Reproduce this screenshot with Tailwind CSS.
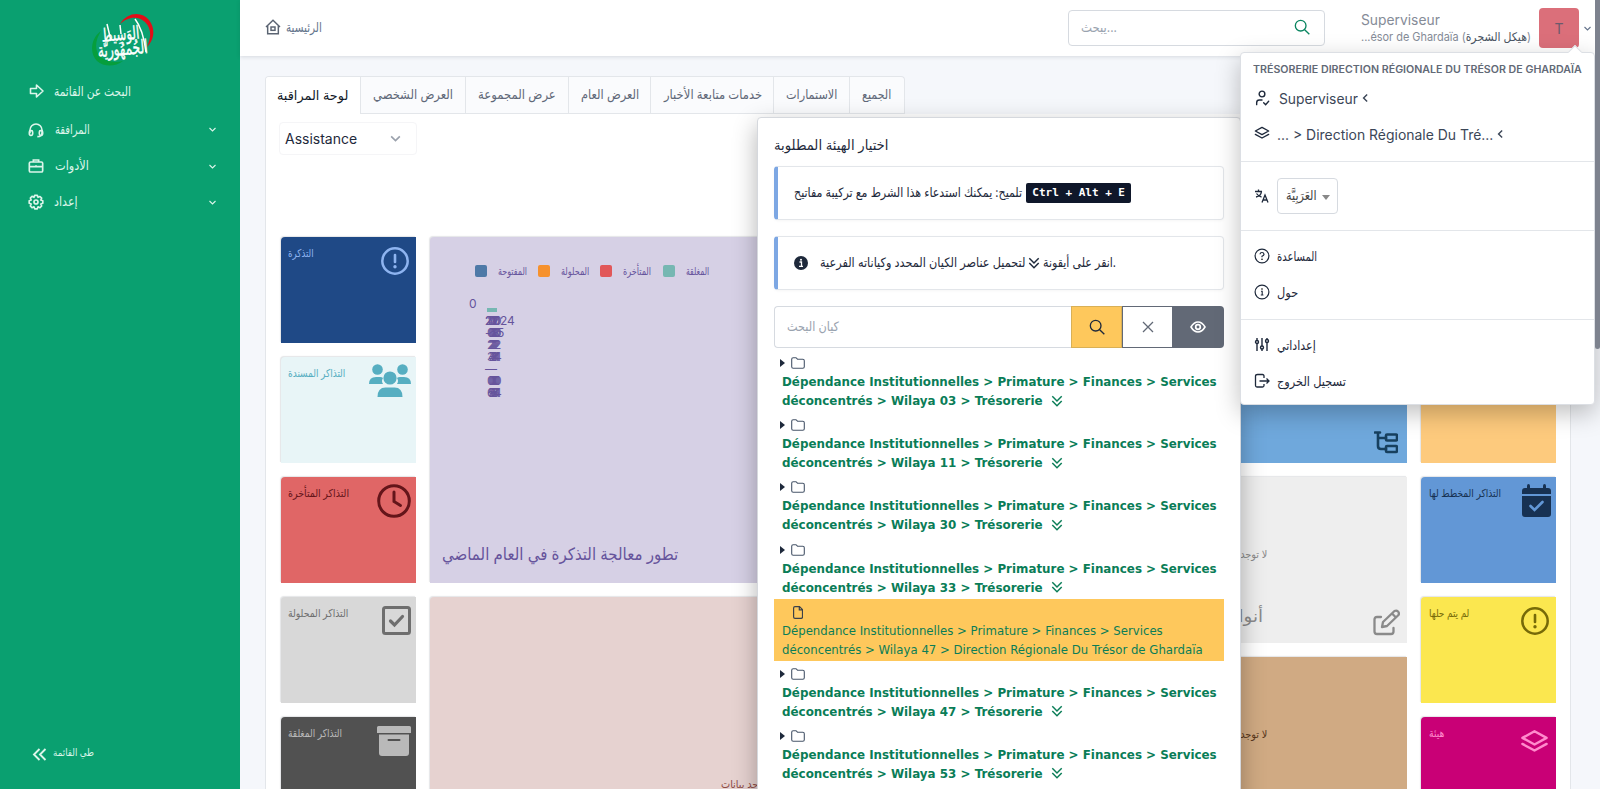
<!DOCTYPE html>
<html lang="ar">
<head>
<meta charset="utf-8">
<title>الرئيسية</title>
<script src="https://cdn.jsdelivr.net/npm/@tailwindcss/browser@4"></script>
</head>
<body class="relative h-[789px] w-[1600px] overflow-hidden bg-[#f5f7fb] font-['Inter','DejaVu_Sans',sans-serif] text-[14px] text-[#1e293b]">
<svg class="hidden">
  <defs>
    <symbol id="chev" viewBox="0 0 24 24"><path d="M4 8l8 8 8-8" fill="none" stroke="currentColor" stroke-width="3"/></symbol>
    <symbol id="left" viewBox="0 0 10 14"><path d="M8 2L3 7l5 5" fill="none" stroke="currentColor" stroke-width="2"/></symbol>
    <symbol id="dchev" viewBox="0 0 14 14"><path d="M1.500 1.500L7 7l5.500-5.500M1.500 7L7 12.500 12.500 7" fill="none" stroke="currentColor" stroke-width="1.700"/></symbol>
    <symbol id="search" viewBox="0 0 24 24"><g fill="none" stroke="currentColor" stroke-width="2"><circle cx="10" cy="10" r="8"/><path d="M16 16l7 7"/></g></symbol>
    <symbol id="folder" viewBox="0 0 14 12"><path d="M.7 2.200Q.7.700 2.200.700H5l1.500 1.500h5.300q1.500 0 1.500 1.500v6.100q0 1.500-1.500 1.500H2.200Q.7 11.300.7 9.800z" fill="none" stroke="#475569" stroke-width="1.100"/></symbol>
    <symbol id="layers" viewBox="0 0 24 24"><g fill="none" stroke="currentColor" stroke-width="2" stroke-linejoin="round" stroke-linecap="round"><path d="M12 3.500l10 5.500-10 5.500L2 9zM2 14l10 5.500L22 14"/></g></symbol>
    <symbol id="alert" viewBox="0 0 28 28"><circle cx="14" cy="14" r="12.700" fill="none" stroke="currentColor" stroke-width="2.500"/><path d="M14 8v7" stroke="currentColor" stroke-width="2.600" stroke-linecap="round"/><circle cx="14" cy="19.800" r="1.700" fill="currentColor"/></symbol>
  </defs>
</svg>

<div class="flex h-full">
  <!-- Sidebar -->
  <aside class="flex h-full w-[240px] shrink-0 flex-col bg-[#0aa070] text-[13px] text-[#dcf5ea]">
    <div class="flex h-[72px] shrink-0 justify-center pt-[12px] pl-[5px]">
      <svg width="66" height="56" viewBox="0 0 66 56">
        <path d="M30 12C37 0 52-1 59 8c7 9 5 20-2 27 4-9 5-18-2-25-7-7-18-5-25 2z" fill="#e30d18"/>
        <path d="M11 19C1 26-1 41 7 49c7 6 18 6 26 0C25 51 15 50 9 43 4 36 6 27 11 19z" fill="#069e3c"/>
        <g fill="#fff" stroke="#fff" stroke-width=".4" font-family="DejaVu Sans" transform="rotate(-5 33 30)">
          <text x="12" y="28" font-size="18" textLength="38" lengthAdjust="spacingAndGlyphs">الوَسِيط</text>
          <text x="7" y="43" font-size="19" textLength="50" lengthAdjust="spacingAndGlyphs">الجُمهُوريّة</text>
        </g>
        <path d="M45 7q8 10 11 33M17 12l4 17M30 13l1 9" stroke="#fff" stroke-width="1.500" fill="none"/>
      </svg>
    </div>
    <nav class="flex flex-col">
      <div class="flex h-[38px] items-center pt-px pl-[29px]">
        <svg width="16" height="16" viewBox="0 0 16 16" class="mr-[9px] -mt-px"><path d="M1.500 5.500h6V2l6.500 6-6.500 6v-3.500h-6z" fill="none" stroke="currentColor" stroke-width="1.600" stroke-linejoin="round"/></svg>
        <span data-w="77" class="pt-px">البحث عن القائمة</span>
      </div>
      <div class="flex h-[38px] items-center pr-[23px] pl-[28px] pt-px">
        <svg width="16" height="16" viewBox="0 0 24 24" class="mr-[11px]"><g fill="none" stroke="currentColor" stroke-width="2.400"><path d="M3 17v-5a9 9 0 0 1 18 0v4c0 4-2 6-7 6"/><rect x="2" y="13" width="5" height="7" rx="2"/><rect x="17" y="13" width="5" height="7" rx="2"/></g></svg>
        <span data-w="35">المرافقة</span>
        <svg width="9" height="9" class="ml-auto"><use href="#chev"/></svg>
      </div>
      <div class="flex h-[36px] items-center pr-[23px] pl-[28px]">
        <svg width="16" height="16" viewBox="0 0 24 24" class="mr-[11px]"><g fill="none" stroke="currentColor" stroke-width="2.500"><rect x="2" y="6" width="20" height="15" rx="2"/><path d="M8 6V3h8v3M2 13h20M12 11v3"/></g></svg>
        <span data-w="34">الأدوات</span>
        <svg width="9" height="9" class="ml-auto"><use href="#chev"/></svg>
      </div>
      <div class="flex h-[36px] items-center pr-[23px] pl-[28px]">
        <svg width="16" height="16" viewBox="0 0 24 24" class="mr-[10px]"><g fill="none" stroke="currentColor" stroke-width="2.500" stroke-linejoin="round"><path d="M10 2h4l1 3 3-1.200 2.500 2.500L19.200 9l3 1v4l-3 1 1.300 3-2.500 2.500L15 19.200l-1 3h-4l-1-3-3 1.300L3.500 18 4.800 15l-3-1v-4l3-1L3.500 6 6 3.500 9 5z"/><circle cx="12" cy="12" r="3"/></g></svg>
        <span data-w="24">إعداد</span>
        <svg width="9" height="9" class="ml-auto"><use href="#chev"/></svg>
      </div>
    </nav>
    <div class="mt-auto mb-[22px] flex h-[25px] items-center pl-[32px]">
      <svg width="15" height="13" viewBox="0 0 15 13" class="mr-[6px]"><path d="M7.500 1L2 6.500 7.500 12M13.500 1L8 6.500l5.500 5.500" fill="none" stroke="currentColor" stroke-width="1.900"/></svg>
      <span data-w="41" class="-mt-[4px] text-[10px]">طي القائمة</span>
    </div>
  </aside>

  <div class="flex min-w-0 flex-1 flex-col">
    <!-- Top bar -->
    <header class="flex h-[56px] shrink-0 items-center bg-white pl-[25px] shadow-[0_1px_4px_rgba(30,41,59,0.14)]">
      <svg width="16" height="16" viewBox="0 0 24 24" class="mr-[5px] -mt-[3px] text-[#5b6472]"><g fill="none" stroke="currentColor" stroke-width="2.200"><path d="M1.500 12L12 2l10.500 10M4 10v12h16V10"/><rect x="9" y="12" width="6" height="5"/></g></svg>
      <span data-w="36" class="text-[13px] text-[#64748b]">الرئيسية</span>
      <div class="ml-auto flex h-[36px] w-[257px] items-center rounded border border-[#d6dae0] pr-[14px] pl-[12px] text-[#9aa3af]">
        <span data-w="36" class="text-[13px]">يبحث...</span>
        <svg width="16" height="16" class="ml-auto -mt-[2px] text-[#0a8560]"><use href="#search"/></svg>
      </div>
      <div class="mr-[8px] ml-[36px] flex w-[170px] flex-col text-[#858b97]">
        <span data-w="79" class="h-[18px] self-start text-[14px] leading-[18px]">Superviseur</span>
        <span data-w="170" class="h-[16px] self-start text-[12px] leading-[16px]">...ésor de Ghardaïa (<b class="font-normal text-[#4b5563]">هيكل الشجرة</b>)</span>
      </div>
      <div class="flex h-[40px] w-[40px] items-center justify-center rounded bg-[#db6f7a] text-[14px] text-[#6b5a6c]">T</div>
      <svg width="9" height="9" class="mr-[8px] ml-[4px] text-[#64748b]"><use href="#chev"/></svg>
    </header>

    <!-- Tabs -->
    <main class="ml-[25px] mt-[20px] w-[1306px] text-[13px]">
      <div class="flex h-[38px] w-[640px] overflow-hidden rounded-t border border-b-0 border-[#e3e6ea] bg-[#fafbfd] text-[#5f6878]">
        <div class="flex w-[95px] items-center border-r border-[#e3e6ea] bg-white pl-[11px] text-[#111827]"><span data-w="71">لوحة المراقبة</span></div>
        <div class="flex w-[105px] items-center border-r border-b border-[#e3e6ea] pl-[12px]"><span data-w="80">العرض الشخصي</span></div>
        <div class="flex w-[103px] items-center border-r border-b border-[#e3e6ea] pl-[12px]"><span data-w="78">عرض المجموعة</span></div>
        <div class="flex w-[82px] items-center border-r border-b border-[#e3e6ea] pl-[12px]"><span data-w="58">العرض العام</span></div>
        <div class="flex w-[123px] items-center border-r border-b border-[#e3e6ea] pl-[13px]"><span data-w="98">خدمات متابعة الأخبار</span></div>
        <div class="flex w-[76px] items-center border-r border-b border-[#e3e6ea] pl-[12px]"><span data-w="51">الاستمارات</span></div>
        <div class="flex flex-1 items-center border-b border-[#e3e6ea] pl-[12px]"><span data-w="29">الجميع</span></div>
      </div>
      <div class="h-[680px] border border-t-0 border-[#e3e6ea] bg-white pt-[8px] pl-[13px]">
        <div class="flex h-[33px] w-[138px] items-center rounded-sm border border-[#f5f5f7] pr-[14px] pl-[5px]">
          <span data-w="72" class="text-[14px]">Assistance</span>
          <svg width="13" height="13" class="ml-auto text-[#9aa1ac]"><use href="#chev"/></svg>
        </div>

        <!-- Dashboard widgets -->
        <div class="mt-[82px] ml-[2px] grid grid-cols-[135px_621px_342px_135px] grid-rows-[repeat(12,46px)] gap-[14px] text-[11px] [&>div]:rounded-tl [&>div]:shadow-[-1px_-1px_1px_rgba(30,41,59,0.12)]">
          <div class="col-start-1 row-start-1 row-span-2 flex justify-between bg-[#1f4986] pt-[7px] pr-[5px] pl-[7px] text-[#8eb4f0]">
            <span data-w="26" class="h-[18px] leading-[18px]">التذكرة</span>
            <svg width="28" height="28" class="mt-[3px] mr-[2px]"><use href="#alert"/></svg>
          </div>
          <div class="col-start-1 row-start-3 row-span-2 flex justify-between bg-[#e8f5f7] pt-[7px] pr-[5px] pl-[7px] text-[#56aec1]">
            <span data-w="57" class="h-[18px] leading-[18px]">التذاكر المسندة</span>
            <svg width="42" height="34" viewBox="0 0 42 34"><g fill="currentColor"><circle cx="8.500" cy="5.500" r="5.300"/><circle cx="33.500" cy="5.500" r="5.300"/><circle cx="21" cy="14" r="6.600"/><path d="M0 20q0-7 7-7h4q2 0 3 1-2 3 0 6zM42 20q0-7-7-7h-4q-2 0-3 1 2 3 0 6zM8.500 33q0-9.500 8-9.500h9q8 0 8 9.500z"/></g></svg>
          </div>
          <div class="col-start-1 row-start-5 row-span-2 flex justify-between bg-[#e06666] pt-[7px] pr-[5px] pl-[7px] text-[#64151a]">
            <span data-w="61" class="h-[18px] leading-[18px]">التذاكر المتأخرة</span>
            <svg width="34" height="34" viewBox="0 0 34 34"><g fill="none" stroke="currentColor" stroke-width="3"><circle cx="17" cy="17" r="15.300"/><path d="M17 8v9.500l6.500 4" stroke-linecap="round"/></g></svg>
          </div>
          <div class="col-start-1 row-start-7 row-span-2 flex justify-between bg-[#d8d8d8] pt-[7px] pr-[5px] pl-[7px] text-[#6e6e6e]">
            <span data-w="60" class="h-[18px] leading-[18px]">التذاكر المحلولة</span>
            <svg width="29" height="29" viewBox="0 0 29 29" class="mt-[2px]"><g fill="none" stroke="currentColor" stroke-width="3"><rect x="1.500" y="1.500" width="26" height="26" rx="2"/><path d="M8.500 15l4 4 8-8.500" stroke-width="3.200" stroke-linecap="round"/></g></svg>
          </div>
          <div class="col-start-1 row-start-9 row-span-2 flex justify-between bg-[#515151] pt-[7px] pr-[5px] pl-[7px] text-[#b9b9b9]">
            <span data-w="54" class="h-[18px] leading-[18px]">التذاكر المغلقة</span>
            <svg width="34" height="30" viewBox="0 0 34 30" class="mt-[2px]"><path d="M1.500 0h31Q34 0 34 1.500V7H0V1.500Q0 0 1.500 0zM2 8.500h30V27q0 3-3 3H5q-3 0-3-3z" fill="currentColor"/><path d="M11.500 14h11" stroke="#515151" stroke-width="2" stroke-linecap="round"/></svg>
          </div>

          <div class="col-start-2 row-start-1 row-span-6 flex flex-col bg-[#d6d0e5] text-[#66549c]">
            <div class="mt-[28px] ml-[45px] flex h-[12px] items-center text-[11px]">
              <i class="mr-[11px] size-[12px] shrink-0 rounded-[2px] bg-[#4e79a7]"></i><span data-w="29">المفتوحة</span>
              <i class="mr-[11px] ml-[11px] size-[12px] shrink-0 rounded-[2px] bg-[#f6912d]"></i><span data-w="28">المحلولة</span>
              <i class="mr-[11px] ml-[11px] size-[12px] shrink-0 rounded-[2px] bg-[#e15759]"></i><span data-w="28">المتأخرة</span>
              <i class="mr-[11px] ml-[11px] size-[12px] shrink-0 rounded-[2px] bg-[#76b7b2]"></i><span data-w="23">المغلقة</span>
            </div>
            <div class="mt-[19px] ml-[39px] flex h-[17px] items-start">
              <span class="w-[18px] text-[12px] leading-[16px]">0</span>
              <i class="mt-[12px] h-[4px] w-[10px] bg-[#76b7b2]"></i>
            </div>
            <!-- Axis labels wrapped per digit group, stacked on a collapsed axis -->
            <div class="relative ml-[55px] h-[86px] w-[40px] text-[12px] leading-[12px] [&>span]:absolute [&>span]:top-[2px]">
              <span class="left-[0px]">2<br>-<br><br><br>—<br><br></span>
              <span class="left-[2px]">2<br>0<br>2<br>3<br><br>0<br>6</span>
              <span class="left-[3px]">0<br>0<br>2<br>4<br><br>0<br>9</span>
              <span class="left-[4px]">2<br>6<br>2<br>3<br><br>0<br>8</span>
              <span class="left-[5px]">0<br>0<br>2<br>4<br><br>0<br>6</span>
              <span class="left-[6px]">2<br>0<br>2<br>3<br><br>0<br>8</span>
              <span class="left-[7px]">2<br>8<br>2<br>4<br><br>0<br>5</span>
              <span class="left-[8px]">0<br>0<br>2<br>4<br><br>0<br>4</span>
              <span class="left-[9px]">0<br>0<br>2<br>4<br><br>0<br>4</span>
              <span class="left-[12px]"><br>5</span>
              <span class="left-[0px]">2024</span>
            </div>
            <span data-w="236" class="mt-[141px] ml-[12px] h-[28px] self-start text-[17px] leading-[28px]">تطور معالجة التذكرة في العام الماضي</span>
          </div>
          <div class="col-start-2 row-start-7 row-span-6 bg-[#e6d2d0] pt-[178px] pl-[291px] text-[#8d4b45]"><span data-w="53" class="h-[18px] leading-[18px]">لا توجد بيانات</span></div>

          <div class="col-start-3 row-start-1 row-span-4 flex items-end justify-end bg-[#6fa8dc] pr-[9px] pb-[9px] text-[#17405f]">
            <svg width="24" height="24" viewBox="0 0 24 24"><g fill="none" stroke="currentColor" stroke-width="2.600" stroke-linejoin="round" stroke-linecap="round"><path d="M1 2.500h5M4 3v13q0 3 3 3h5M4 8h8"/><rect x="12" y="4.500" width="11" height="6" rx="1"/><rect x="12" y="16" width="11" height="6" rx="1"/></g></svg>
          </div>
          <div class="col-start-3 row-start-5 row-span-3 flex flex-col bg-[#eeeeee] pt-[68px] pr-[7px] text-[#8a8a8a]">
            <span data-w="53" class="ml-[149px] h-[18px] self-start leading-[18px]">لا توجد بيانات</span>
            <div class="mt-[34px] flex items-center justify-between">
              <span data-w="90" class="ml-[108px] h-[30px] text-[17px] leading-[28px]">أنواع التذاكر</span>
              <svg width="27" height="27" viewBox="0 0 27 27" class="mt-[12px]"><g fill="none" stroke="currentColor" stroke-width="2.300" stroke-linejoin="round" stroke-linecap="round"><path d="M8 8H4Q1.500 8 1.500 10.500v12Q1.500 25 4 25h14q2.500 0 2.500-2.500V19"/><path d="M9 18l1-5L21.500 2q2-1 3.500.500t.5 3.500L14 17zM19 4.500L22.500 8"/></g></svg>
            </div>
          </div>
          <div class="col-start-3 row-start-8 row-span-4 bg-[#d0aa83] pt-[68px] pl-[149px] text-[#59391c]"><span data-w="53" class="h-[18px] leading-[18px]">لا توجد بيانات</span></div>

          <div class="col-start-4 row-start-1 row-span-4 bg-[#fdca7d]"></div>
          <div class="col-start-4 row-start-5 row-span-2 flex justify-between bg-[#6297d6] pt-[7px] pr-[5px] pl-[8px] text-[#173152]">
            <span data-w="72" class="h-[18px] leading-[18px]">التذاكر المخطط لها</span>
            <svg width="29" height="33" viewBox="0 0 29 33"><path d="M6.500 0Q8 0 8 2v2h13V2q0-2 1.500-2T24 2v2h2q3 0 3 3v3H0V7q0-3 3-3h2V2q0-2 1.500-2zM0 12h29v18q0 3-3 3H3q-3 0-3-3z" fill="currentColor"/><path d="M8.500 22l4 4 8-8" fill="none" stroke="#6297d6" stroke-width="2.600" stroke-linecap="round"/></svg>
          </div>
          <div class="col-start-4 row-start-7 row-span-2 flex justify-between bg-[#fbe74f] pt-[7px] pr-[5px] pl-[8px] text-[#766a08]">
            <span data-w="40" class="h-[18px] leading-[18px]">لم يتم حلها</span>
            <svg width="28" height="28" class="mt-[3px] mr-[2px]"><use href="#alert"/></svg>
          </div>
          <div class="col-start-4 row-start-9 row-span-2 flex justify-between bg-[#c90076] pt-[7px] pr-[5px] pl-[8px] text-[#ff8bcd]">
            <span data-w="15" class="h-[18px] leading-[18px]">هيئة</span>
            <svg width="29" height="29" class="mt-[3px] mr-[2px]"><use href="#layers"/></svg>
          </div>
        </div>
      </div>
    </main>
  </div>
</div>

<!-- Entity picker -->
<section class="absolute top-[117px] left-[757px] h-[700px] w-[484px] rounded border border-[#d5d8dd] bg-white px-[16px] pt-[13px] shadow-[0_8px_24px_rgba(0,0,0,0.3)]">
  <h2 class="flex h-[26px] items-center text-[14px] text-[#1e293b]"><span data-w="114">اختيار الهيئة المطلوبة</span></h2>
  <div class="mt-[9px] flex h-[54px] items-center rounded border border-l-4 border-[#e3e6ea] border-l-[#7da7e3] pl-[16px] shadow-[0_1px_3px_rgba(0,0,0,0.04)]">
    <span data-w="228" class="text-[13px]">تلميح: يمكنك استدعاء هذا الشرط مع تركيبة مفاتيح</span>
    <kbd class="ml-[4px] flex h-[20px] w-[105px] items-center justify-center rounded-[2px] bg-[#0f172a] font-['DejaVu_Sans_Mono',monospace] text-white"><span data-w="93" class="text-[11px] font-semibold">Ctrl + Alt + E</span></kbd>
  </div>
  <div class="mt-[16px] flex h-[54px] items-center rounded border border-l-4 border-[#e3e6ea] border-l-[#7da7e3] pl-[16px] text-[13px] shadow-[0_1px_3px_rgba(0,0,0,0.04)]">
    <svg width="14" height="14" viewBox="0 0 14 14" class="mr-[12px]"><circle cx="7" cy="7" r="7" fill="#1e293b"/><path d="M5.500 6H7.500v4M5 10.300h4" stroke="#fff" stroke-width="1.300" fill="none"/><circle cx="7" cy="3.700" r="1" fill="#fff"/></svg>
    <span data-w="205">لتحميل عناصر الكيان المحدد وكياناته الفرعية</span>
    <svg width="12" height="12" class="mx-[3px]"><use href="#dchev"/></svg>
    <span data-w="73">&#x200E;انقر على أيقونة&#x200E;.</span>
  </div>
  <div class="mt-[16px] flex h-[42px] text-[#9aa3af]">
    <div class="flex flex-1 items-center rounded-l border border-r-0 border-[#d6dae0] pl-[12px]"><span data-w="52" class="text-[13px]">كيان البحث</span></div>
    <div class="flex w-[51px] items-center justify-center border border-[#d9b056] bg-[#fec85c] text-[#1e293b]"><svg width="16" height="16"><use href="#search"/></svg></div>
    <div class="flex w-[50px] items-center justify-center border border-r-0 border-[#626976] text-[#626976]"><svg width="12" height="12" viewBox="0 0 12 12"><path d="M1 1l10 10M11 1L1 11" stroke="currentColor" stroke-width="1.300"/></svg></div>
    <div class="flex w-[52px] items-center justify-center rounded-r bg-[#626976] text-white"><svg width="16" height="12" viewBox="0 0 16 12"><path d="M1 6q3-5 7-5t7 5q-3 5-7 5T1 6z" fill="none" stroke="#fff" stroke-width="1.600"/><circle cx="8" cy="6" r="2.300" fill="none" stroke="#fff" stroke-width="1.700"/></svg></div>
  </div>

  <div id="tree" class="mt-[2px] font-['DejaVu_Sans',sans-serif] text-[13px] leading-[19px] text-[#0a7d57]">
    <template>
      <div class="h-[62.200px] pl-[8px]">
        <div class="-mb-[4px] -ml-[2px] flex h-[26px] items-center"><svg width="5" height="8" viewBox="0 0 5 8" class="mr-[6px]"><path d="M0 0l5 4-5 4z" fill="#1e293b"/></svg><svg width="14" height="12"><use href="#folder"/></svg></div>
        <div class="flex h-[19px] font-bold"><span data-w="435">Dépendance Institutionnelles &gt; Primature &gt; Finances &gt; Services</span></div>
        <div class="flex h-[19px] items-center font-bold"><span data-w="261" class="line"></span><svg width="12" height="12" class="ml-[8px]"><use href="#dchev"/></svg></div>
      </div>
    </template>
    <div data-wilaya="03"></div>
    <div data-wilaya="11"></div>
    <div data-wilaya="30"></div>
    <div data-wilaya="33"></div>
    <div class="h-[62px] bg-[#fec85c] pl-[8px]">
      <div class="-mb-[2px] flex h-[24px] items-center pl-[11px] pt-[3px]"><svg width="10" height="13" viewBox="0 0 10 13"><path d="M.600 2Q.600.600 2 .600h4.500l3 3v7.400q0 1.400-1.400 1.400H2Q.600 12.400.600 11zM6.300.800v3h3" fill="none" stroke="#3b4149" stroke-width="1.200"/></svg></div>
      <div class="flex h-[19px]"><span data-w="381">Dépendance Institutionnelles &gt; Primature &gt; Finances &gt; Services</span></div>
      <div class="flex h-[19px]"><span data-w="421">déconcentrés &gt; Wilaya 47 &gt; Direction Régionale Du Trésor de Ghardaïa</span></div>
    </div>
    <div data-wilaya="47"></div>
    <div data-wilaya="53"></div>
  </div>
</section>

<!-- User menu -->
<section class="absolute top-[52px] left-[1240px] h-[353px] w-[355px] rounded border border-[#dcdfe4] bg-white text-[#1e293b] shadow-[0_8px_24px_rgba(0,0,0,0.25)]">
  <i class="absolute -top-[6px] left-[329px] size-[10px] rotate-45 border-t border-l border-[#dcdfe4] bg-white"></i>
  <div class="mt-[5px] flex h-[22px] items-center pl-[12px] text-[10px] font-semibold text-[#626976]"><span data-w="329">TRÉSORERIE DIRECTION RÉGIONALE DU TRÉSOR DE GHARDAÏA</span></div>
  <div class="flex h-[36px] items-center pl-[13px] text-[#3b4657]">
    <svg width="16" height="16" viewBox="0 0 24 24" class="mr-[9px] text-[#1e293b]"><g fill="none" stroke="currentColor" stroke-width="2.100" stroke-linecap="round"><circle cx="12" cy="6" r="4.300"/><path d="M4 22v-3q0-4 4-4h4M14.500 19l3 3 4.500-5"/></g></svg>
    <span data-w="79">Superviseur</span>
    <svg width="8" height="10" class="ml-[3px]"><use href="#left"/></svg>
  </div>
  <div class="flex h-[36px] items-center pl-[13px] text-[#3b4657]">
    <svg width="16" height="16" class="mr-[7px] -mt-[2px] text-[#1e293b]"><use href="#layers"/></svg>
    <span data-w="216">... &gt; Direction Régionale Du Tré...</span>
    <svg width="8" height="10" class="ml-[3px]"><use href="#left"/></svg>
  </div>
  <div class="mt-[9px] border-t border-[#e3e6ea]"></div>
  <div class="flex h-[68px] items-center pl-[14px]">
    <svg width="14" height="14" viewBox="0 0 14 14" class="mr-[8px]"><g fill="none" stroke="currentColor" stroke-width="1.300"><path d="M0 2.500h7M3.500.500v2M1 8q5-1 5.500-5.500M1.500 4.500q2 3 5 3.500M7 13.500l3-7.500 3 7.500M8 11h4"/></g></svg>
    <div class="flex h-[36px] w-[61px] items-center rounded-sm border border-[#d6dae0] pl-[8px]">
      <span data-w="31" class="text-[13px] text-[#444]">العَرَبِيَّة</span>
      <svg width="8" height="5" viewBox="0 0 8 5" class="ml-[5px] mt-[3px]"><path d="M0 0h8L4 5z" fill="#888"/></svg>
    </div>
  </div>
  <div class="border-t border-[#e3e6ea]"></div>
  <div class="mt-[8px] flex h-[36px] items-center pl-[13px] text-[13px]">
    <svg width="16" height="16" viewBox="0 0 16 16" class="mr-[7px] -mt-[2px]"><circle cx="8" cy="8" r="6.900" fill="none" stroke="currentColor" stroke-width="1.200"/><path d="M6 6.200Q6.200 4.500 8 4.500t2 1.700Q10 7.500 8 8.200v1" fill="none" stroke="currentColor" stroke-width="1.200"/><circle cx="8" cy="11.300" r=".8"/></svg>
    <span data-w="40">المساعدة</span>
  </div>
  <div class="flex h-[36px] items-center pl-[13px] text-[13px]">
    <svg width="16" height="16" viewBox="0 0 16 16" class="mr-[7px] -mt-[2px]"><circle cx="8" cy="8" r="6.900" fill="none" stroke="currentColor" stroke-width="1.200"/><path d="M7 7.200h1.200v3.600M6.800 11h2.600" fill="none" stroke="currentColor" stroke-width="1.100"/><circle cx="8" cy="5" r=".8"/></svg>
    <span data-w="21">حول</span>
  </div>
  <div class="mt-[8px] border-t border-[#e3e6ea]"></div>
  <div class="mt-[8px] flex h-[36px] items-center pl-[13px] text-[13px]">
    <svg width="16" height="16" viewBox="0 0 16 16" class="mr-[7px] -mt-[2px]"><g fill="none" stroke="currentColor" stroke-width="1.400"><circle cx="3" cy="5" r="1.500"/><circle cx="8" cy="10.500" r="1.500"/><circle cx="13" cy="4" r="1.500"/><path d="M3 1v2.500M3 6.500V14M8 1v8M8 12v2M13 1v1.500M13 5.500V14"/></g></svg>
    <span data-w="39">إعداداتي</span>
  </div>
  <div class="flex h-[36px] items-center pl-[13px] text-[13px]">
    <svg width="16" height="16" viewBox="0 0 16 16" class="mr-[7px] -mt-[2px]"><path d="M10 5V3q0-1.500-1.500-1.500h-5Q1.500 1.500 1.500 3v9.500Q1.500 14 3 14h5.500q1.500 0 1.500-1.500V11M5.500 8H15M12.500 5.500L15 8l-2.500 2.500" fill="none" stroke="currentColor" stroke-width="1.300"/></svg>
    <span data-w="69">تسجيل الخروج</span>
  </div>
</section>

<div class="absolute top-0 right-0 h-[349px] w-[5px] rounded-b bg-[#7d828e]"></div>

<script>
  // Build the collapsed tree rows
  const row = document.querySelector('#tree template');
  document.querySelectorAll('[data-wilaya]').forEach(slot => {
    const node = row.content.cloneNode(true);
    node.querySelector('.line').textContent = 'déconcentrés > Wilaya ' + slot.dataset.wilaya + ' > Trésorerie';
    slot.append(node);
  });
  const fit = (el, natural) => {
    if (!natural) return;
    el.style.transform = 'scaleX(' + el.dataset.w / natural + ')';
    el.style.marginRight = (el.dataset.w - natural) + 'px';
  };
  const observer = new ResizeObserver(entries => entries.forEach(e => fit(e.target, e.borderBoxSize[0].inlineSize)));
  const labels = document.querySelectorAll('[data-w]');
  labels.forEach(el => {
    el.style.display = 'inline-block';
    el.style.whiteSpace = 'nowrap';
    el.style.flexShrink = '0';
    el.style.transformOrigin = '0 50%';
    fit(el, el.offsetWidth);
    observer.observe(el);
  });
  addEventListener('load', () => labels.forEach(el => fit(el, el.offsetWidth)));
</script>
</body>
</html>
